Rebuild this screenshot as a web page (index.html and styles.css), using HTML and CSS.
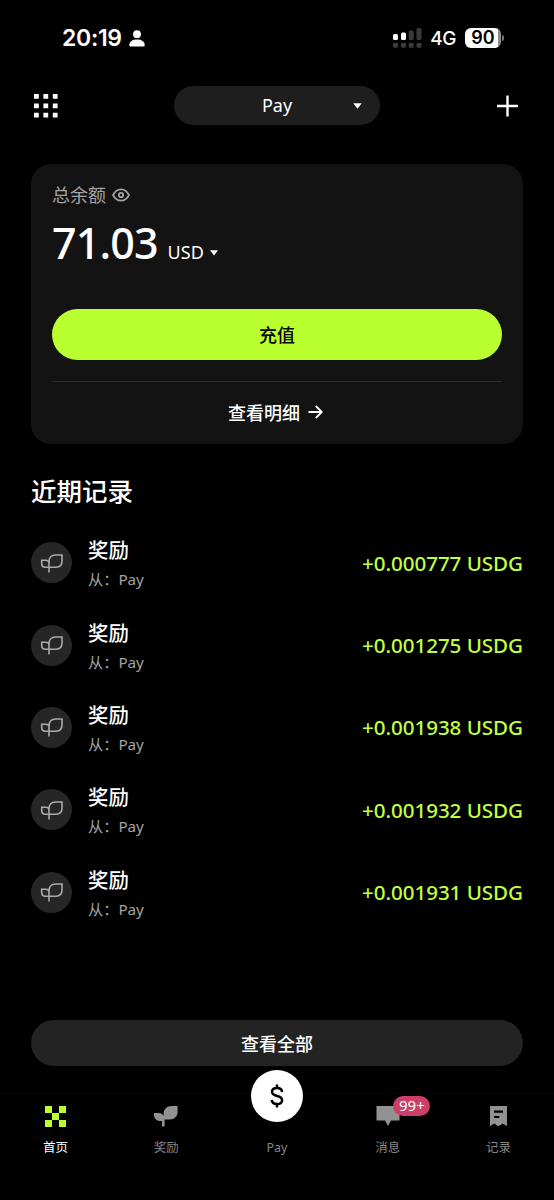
FILE: index.html
```html
<!DOCTYPE html>
<html lang="zh-CN">
<head>
    <meta charset="UTF-8">
    <meta name="viewport" content="width=device-width, initial-scale=1.0">
    <title>Pay</title>
    <link rel="stylesheet" href="styles.css">
</head>
<body>
    <svg class="defs" width="0" height="0">
        <symbol id="leaf-line" viewBox="0 0 24 20">
            <path d="M9 19.500V9C9 4.500 11.500 2 15.500 2H22V8C22 12 19.800 14.200 16 14.200H5.500C3 14.200 1.700 12.500 1.700 10.500V7.300H5.500C7.700 7.300 9 8.300 9 10.500" fill="none" stroke="currentColor" stroke-width="1.600"/>
        </symbol>
    </svg>

    <div class="status-bar">
        <div class="status-left">
            <span class="time">20:19</span>
            <svg width="16" height="17" viewBox="0 0 16 17">
                <circle cx="8" cy="4.200" r="3.900" fill="#fff"/>
                <path d="M0.300 15C0.300 11.500 3.500 9.500 8 9.500S15.700 11.500 15.700 15C15.700 16 15.200 16.500 14.200 16.500H1.800C0.800 16.500 0.300 16 0.300 15Z" fill="#fff"/>
            </svg>
        </div>
        <div class="status-right">
            <svg width="29" height="20" viewBox="0 0 29 20">
                <g fill="#fff">
                    <rect x="0" y="6" width="5" height="6" rx="1.500"/>
                    <rect x="8" y="4.500" width="5" height="7.500" rx="1.500"/>
                </g>
                <g fill="#3a3a3a">
                    <rect x="15.700" y="2.500" width="5" height="9.500" rx="1.500"/>
                    <rect x="23.500" y="0" width="5" height="12" rx="1.500"/>
                    <rect x="0" y="14.700" width="5" height="5" rx="1.500"/>
                    <rect x="8" y="14.700" width="5" height="5" rx="1.500"/>
                    <rect x="15.700" y="14.700" width="5" height="5" rx="1.500"/>
                    <rect x="23.500" y="14.700" width="5" height="5" rx="1.500"/>
                </g>
            </svg>
            <span class="network">4G</span>
            <div class="battery"><span>90</span></div>
        </div>
    </div>

    <header>
        <svg width="24" height="24" viewBox="0 0 24 24" fill="#fff">
            <path d="M0 0h4.800v4.800H0zM9.400 0h4.800v4.800H9.400zM18.800 0h4.800v4.800h-4.800zM0 9.400h4.800v4.800H0zM9.400 9.400h4.800v4.800H9.400zM18.800 9.400h4.800v4.800h-4.800zM0 18.800h4.800v4.800H0zM9.400 18.800h4.800v4.800H9.400zM18.800 18.800h4.800v4.800h-4.800z"/>
        </svg>
        <div class="switcher">
            <span>Pay</span>
            <svg class="caret" width="9" height="6" viewBox="0 0 9 6"><path d="M0.300 0.300H8.700L4.500 5.700Z" fill="#fff"/></svg>
        </div>
        <svg class="plus" width="22" height="22" viewBox="0 0 22 22"><path d="M11.500 0.500V21.500M1 11H22" stroke="#fff" stroke-width="2.400"/></svg>
    </header>

    <main>
        <section class="card">
            <div class="balance-label">
                <span>总余额</span>
                <svg width="18" height="14" viewBox="0 0 18 14" fill="none" stroke="#a3a3a3">
                    <path d="M1 7C3 3.200 5.700 1.300 9 1.300S15 3.200 17 7C15 10.800 12.300 12.700 9 12.700S3 10.800 1 7Z" stroke-width="1.700"/>
                    <circle cx="9" cy="7" r="2.200" stroke-width="1.800"/>
                </svg>
            </div>
            <div class="balance">
                <span class="amount">71.03</span>
                <span class="currency">USD</span>
                <svg width="8" height="6" viewBox="0 0 8 6"><path d="M0 0.300H8L4 5.500Z" fill="#fff"/></svg>
            </div>
            <button class="deposit">充值</button>
            <a class="details">
                <span>查看明细</span>
                <svg width="15" height="14" viewBox="0 0 15 14"><path d="M0.500 7H13.500M7.800 1L13.800 7L7.800 13" fill="none" stroke="#fff" stroke-width="1.800"/></svg>
            </a>
        </section>

        <h2>近期记录</h2>
        <ul class="records">
            <li>
                <div class="record-icon"><svg width="24" height="20"><use href="#leaf-line"/></svg></div>
                <div class="record-text"><h3>奖励</h3><p>从：<span>Pay</span></p></div>
                <span class="record-amount">+0.000777 USDG</span>
            </li>
            <li>
                <div class="record-icon"><svg width="24" height="20"><use href="#leaf-line"/></svg></div>
                <div class="record-text"><h3>奖励</h3><p>从：<span>Pay</span></p></div>
                <span class="record-amount">+0.001275 USDG</span>
            </li>
            <li>
                <div class="record-icon"><svg width="24" height="20"><use href="#leaf-line"/></svg></div>
                <div class="record-text"><h3>奖励</h3><p>从：<span>Pay</span></p></div>
                <span class="record-amount">+0.001938 USDG</span>
            </li>
            <li>
                <div class="record-icon"><svg width="24" height="20"><use href="#leaf-line"/></svg></div>
                <div class="record-text"><h3>奖励</h3><p>从：<span>Pay</span></p></div>
                <span class="record-amount">+0.001932 USDG</span>
            </li>
            <li>
                <div class="record-icon"><svg width="24" height="20"><use href="#leaf-line"/></svg></div>
                <div class="record-text"><h3>奖励</h3><p>从：<span>Pay</span></p></div>
                <span class="record-amount">+0.001931 USDG</span>
            </li>
        </ul>
        <button class="view-all">查看全部</button>
    </main>

    <nav>
        <a class="active">
            <svg width="21" height="21" viewBox="0 0 21 21"><path d="M0 0h7v7H0zM14 0h7v7h-7zM7 7h7v7H7zM0 14h7v7H0zM14 14h7v7h-7z" fill="#baff2f"/></svg>
            <span>首页</span>
        </a>
        <a>
            <svg width="24" height="21" viewBox="0 0 24 21"><path d="M0 7H4.500C7 7 8.800 8.200 9.600 10V8C9.600 3.500 13 0 17.500 0H23.600V6C23.600 10.300 20.300 13.500 16 13.500H10.600V20.500H8V15H6.500C2.500 15 0 12.500 0 9Z" fill="#929292"/></svg>
            <span>奖励</span>
        </a>
        <a class="pay">
            <div class="pay-button">
                <svg width="14" height="24" viewBox="0 0 14 26" fill="none" stroke="#000" stroke-width="2.700">
                    <path d="M12.500 8.500C12.300 5.800 10.200 4.300 7 4.300S1.600 5.900 1.600 8.500C1.600 11.200 3.800 12.200 7 12.900S12.500 14.700 12.500 17.500S10.300 21.700 7 21.700S1.500 20 1.300 17.200M7 0.500V4.500M7 21.500V25.500"/>
                </svg>
            </div>
            <span>Pay</span>
        </a>
        <a class="messages">
            <svg width="24" height="21" viewBox="0 0 24 21"><path d="M0.500 0H23.500V14.500H15L12 20L9 14.500H0.500Z" fill="#929292"/></svg>
            <em class="badge">99+</em>
            <span>消息</span>
        </a>
        <a>
            <svg width="17" height="21" viewBox="0 0 17 21"><path d="M0 0H17V20.300L12.800 17.400L8.500 20.300L4.200 17.400L0 20.300Z" fill="#929292"/><path d="M4 5.700H13M4 11H9.300" stroke="#000" stroke-width="2.200"/></svg>
            <span>记录</span>
        </a>
    </nav>
</body>
</html>
```
FILE: styles.css
```css
* {
    box-sizing: border-box;
}
body {
    font-family: "Noto Sans", "Noto Sans CJK SC", sans-serif;
    margin: 0;
    height: 1200px;
    display: flex;
    flex-direction: column;
    background: #000;
    color: #fff;
    overflow: hidden;
}
svg {
    display: block;
    flex: none;
}
.defs {
    position: absolute;
}
button {
    border: none;
    font-family: inherit;
    cursor: pointer;
}

/* Status bar */
.status-bar {
    display: flex;
    justify-content: space-between;
    align-items: center;
    height: 76px;
    padding: 0 49px 0 62px;
    font-family: Inter, sans-serif;
}
.status-left,
.status-right {
    display: flex;
    align-items: center;
}
.status-left {
    gap: 7px;
}
.time {
    font-size: 23px;
    font-weight: 600;
    letter-spacing: -0.3px;
}
.network {
    margin: 0 9px 0 8px;
    font-size: 19px;
    font-weight: 500;
    letter-spacing: -0.5px;
}
.battery {
    position: relative;
    width: 36px;
    height: 20px;
    margin-right: 4px;
    border-radius: 6px;
    background: linear-gradient(90deg, #fff 33px, #8b8b8b 33px);
    color: #000;
    font-size: 18px;
    font-weight: 600;
    line-height: 20px;
    text-align: center;
}
.battery::after {
    content: '';
    position: absolute;
    top: 7px;
    right: -3px;
    width: 2px;
    height: 6px;
    border-radius: 0 3px 3px 0;
    background: #777;
}

/* Header */
header {
    display: flex;
    justify-content: space-between;
    align-items: center;
    height: 59px;
    padding: 0 36px 0 34px;
}
.switcher {
    position: relative;
    width: 206px;
    height: 39px;
    border-radius: 20px;
    background: #1e1e1e;
    font-size: 18px;
    line-height: 39px;
    text-align: center;
}
.caret {
    position: absolute;
    top: 17px;
    right: 18px;
}

/* Balance */
main {
    padding: 29px 31px 0;
    height: 958px;
}
.card {
    height: 280px;
    padding: 18px 21px 0;
    border-radius: 20px;
    background: #131313;
}
.balance-label {
    display: flex;
    align-items: center;
    gap: 6px;
    height: 25px;
    color: #a3a3a3;
    font-size: 18px;
    line-height: 24px;
}
.balance {
    display: flex;
    align-items: baseline;
    height: 102px;
}
.amount {
    font-size: 43px;
    font-weight: 500;
    line-height: 72px;
    letter-spacing: -0.9px;
}
.currency {
    margin: 0 6px 0 10px;
    font-size: 18px;
}
.balance svg {
    position: relative;
    top: -3px;
}
.deposit {
    width: 100%;
    height: 51px;
    padding-bottom: 3px;
    border-radius: 26px;
    background: #baff2f;
    color: #000;
    font-size: 18px;
    font-weight: 500;
}
.details {
    display: flex;
    justify-content: center;
    align-items: center;
    gap: 8px;
    height: 63px;
    margin-top: 21px;
    padding-right: 3px;
    padding-bottom: 2px;
    border-top: 1px solid #2b2b2b;
    font-size: 18px;
    font-weight: 500;
}

/* Records */
h2 {
    margin: 30px 0 0;
    font-size: 25.5px;
    font-weight: 500;
    line-height: 34px;
}
.records {
    height: 498px;
    margin: 13.5px 0 0;
    padding: 0;
    list-style: none;
}
.records li {
    display: flex;
    align-items: center;
    height: 82.4px;
}
.record-icon {
    display: flex;
    justify-content: center;
    align-items: center;
    width: 41px;
    height: 41px;
    margin-right: 16px;
    border-radius: 50%;
    background: #262626;
    color: #aaa;
}
.record-text {
    flex: 1;
    padding-top: 3px;
}
.record-text h3 {
    margin: 0;
    font-size: 20.4px;
    font-weight: 500;
    line-height: 28px;
}
.record-text p {
    margin: 2px 0 0;
    color: #a3a3a3;
    font-size: 15.2px;
    line-height: 26px;
}
.record-amount {
    color: #c0ff3e;
    font-size: 20.6px;
    font-weight: 500;
    letter-spacing: -0.05px;
}
.view-all {
    width: 100%;
    height: 46px;
    margin-top: 0.5px;
    padding-bottom: 2px;
    border-radius: 23px;
    background: #232323;
    color: #fff;
    font-size: 18px;
    font-weight: 500;
}

/* Tab bar */
nav {
    display: flex;
    height: 107px;
    padding-top: 12px;
    border-top: 1px solid #05050a;
}
nav a {
    position: relative;
    display: flex;
    flex: 1;
    flex-direction: column;
    align-items: center;
    gap: 10px;
    color: #858585;
    font-size: 12.5px;
    line-height: 21px;
}
nav a.active {
    color: #fff;
}
.pay-button {
    display: flex;
    justify-content: center;
    align-items: center;
    width: 52px;
    height: 52px;
    margin-top: -36px;
    margin-bottom: 5px;
    border-radius: 50%;
    background: #fff;
}
.badge {
    position: absolute;
    top: -10px;
    left: 61px;
    width: 37px;
    height: 20px;
    border-radius: 10px;
    background: #cc3f66;
    color: #fff;
    font-size: 15px;
    font-style: normal;
    line-height: 19px;
    text-align: center;
}
```
